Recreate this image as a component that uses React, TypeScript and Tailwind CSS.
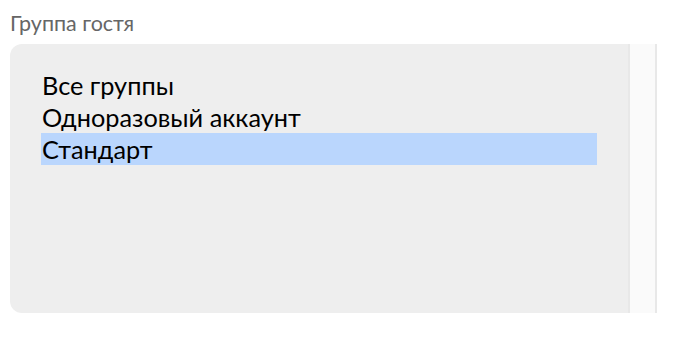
const groups = ["Все группы", "Одноразовый аккаунт", "Стандарт"];

export default function App() {
  const selected = 2;
  return (
    <div className="h-[342px] w-[692px] bg-white pl-[10px] pt-[11px] font-['Lato','Noto_Sans',sans-serif]">
      <div className="text-[21.5px] leading-[25px] text-[#666666]">Группа гостя</div>
      <div className="mt-[8px] flex h-[269px] w-[647px] overflow-hidden rounded-l-[12px] bg-[#eeeeee]">
        <ul className="flex-1 px-[31px] pt-[25px]">
          {groups.map((g, i) => (
            <li
              key={g}
              className={`h-[32px] pl-[1px] text-[25.3px] leading-[32px] text-black ${
                i === selected ? "bg-[#bad6fd]" : ""
              }`}
            >
              {g}
            </li>
          ))}
        </ul>
        <div className="w-[29px] border-x-2 border-[#e8e8e8] bg-[#fafafa]" />
      </div>
    </div>
  );
}
